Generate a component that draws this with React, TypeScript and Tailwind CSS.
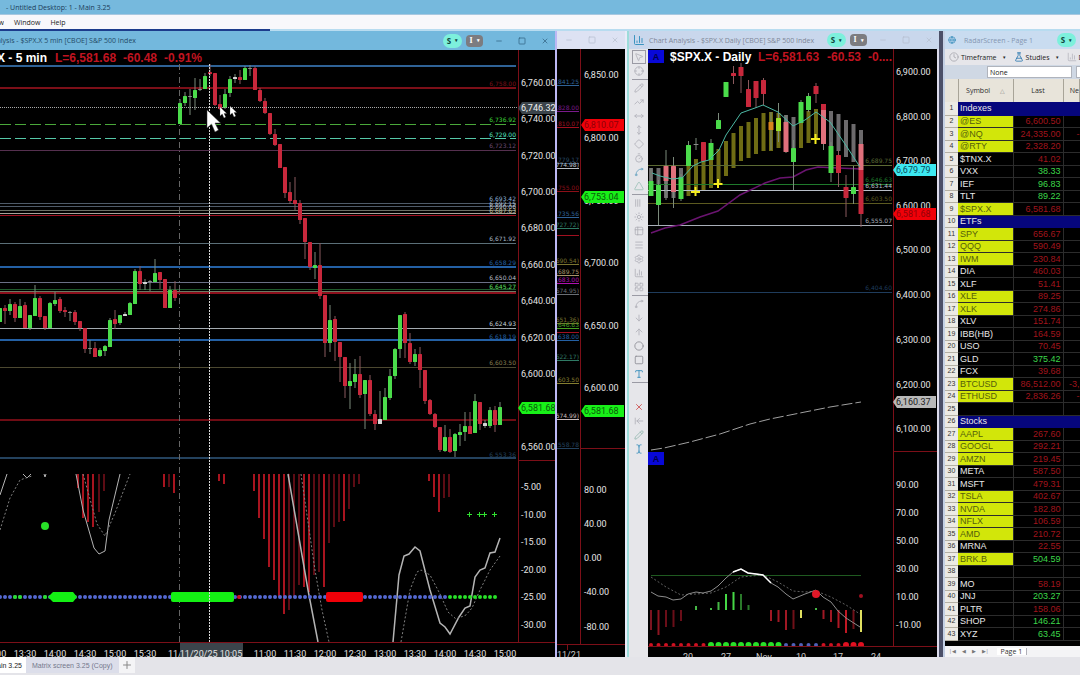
import {
  ArrowDown,
  ArrowLeftToLine,
  ArrowUp,
  BarChart3,
  Circle,
  Clock,
  Crosshair,
  Diamond,
  FlaskConical,
  Globe,
  LayoutGrid,
  Menu,
  Minus,
  MousePointer2,
  MoveHorizontal,
  MoveVertical,
  Pencil,
  Plus,
  Settings,
  Spline,
  Square,
  Sun,
  Table2,
  Tally3,
  TextCursor,
  Timer,
  TrendingUp,
  Triangle,
  Type,
  X,
} from "lucide-react";
import type { LucideIcon } from "lucide-react";
import { clsx } from "clsx";

// kind, body top, body bottom, wick top, wick bottom
type Candle = [string, number, number, number, number];
// ty is the text's own baseline, for levels that sit close together
type Level = { y: number; color: string; text?: string; dash?: string; w?: number; ty?: number };

const COLORS: Record<string, string> = {
  g: "#4bdc4b",
  l: "#9be32c",
  o: "#d8861c",
  p: "#e0707c",
  r: "#c8283c",
  w: "#d6d6d6",
  x: "#8a8a8a",
};

const FIVE_MIN: Candle[] = [
  ["g", 308, 322, 308, 322], ["r", 308, 311, 305, 324], ["g", 304, 311, 299, 315],
  ["r", 304, 318, 302, 322], ["g", 306, 318, 299, 318], ["r", 305, 328, 302, 328],
  ["g", 315, 328, 315, 330], ["g", 298, 316, 285, 316], ["r", 298, 317, 296, 320],
  ["r", 316, 328, 316, 330], ["g", 303, 328, 302, 328], ["g", 300, 304, 292, 306],
  ["r", 299, 311, 297, 313], ["r", 310, 312, 307, 317], ["x", 312, 313, 311, 321],
  ["r", 312, 322, 310, 325], ["r", 321, 328, 321, 331], ["r", 328, 349, 328, 353],
  ["x", 348, 349, 340, 354], ["r", 348, 357, 342, 357], ["g", 350, 356, 348, 357],
  ["g", 346, 351, 345, 356], ["g", 320, 347, 318, 347], ["r", 319, 324, 310, 329],
  ["g", 315, 323, 315, 325], ["w", 314, 316, 312, 316], ["g", 303, 315, 302, 315],
  ["g", 271, 304, 269, 304], ["r", 271, 284, 266, 290], ["w", 282, 284, 279, 290],
  ["x", 281, 282, 280, 291], ["g", 273, 282, 259, 282], ["r", 272, 280, 272, 289],
  ["r", 279, 308, 279, 308], ["g", 290, 308, 286, 308], ["r", 290, 298, 281, 301],
  ["g", 103, 124, 99, 124], ["g", 96, 103, 92, 106], ["x", 96, 97, 89, 115],
  ["g", 90, 98, 78, 110], ["x", 89, 90, 79, 91], ["g", 76, 89, 73, 89],
  ["r", 72, 74, 64, 76], ["r", 73, 105, 73, 106], ["r", 104, 109, 95, 110],
  ["g", 94, 108, 89, 109], ["g", 79, 93, 76, 97], ["w", 77, 79, 74, 83],
  ["r", 77, 80, 70, 84], ["g", 68, 80, 66, 80], ["x", 68, 69, 65, 76],
  ["r", 68, 90, 66, 90], ["r", 90, 101, 88, 102], ["r", 101, 113, 98, 114],
  ["r", 113, 134, 113, 135], ["r", 134, 145, 129, 146], ["r", 144, 168, 144, 168],
  ["r", 167, 193, 167, 198], ["r", 192, 201, 182, 204], ["r", 200, 204, 177, 210],
  ["r", 203, 220, 200, 224], ["r", 218, 242, 218, 259], ["r", 242, 267, 242, 270],
  ["g", 265, 268, 252, 279], ["r", 265, 296, 243, 299], ["r", 295, 343, 295, 357],
  ["g", 320, 343, 305, 352], ["r", 319, 342, 316, 361], ["r", 342, 357, 342, 382],
  ["r", 357, 386, 357, 398], ["g", 381, 386, 363, 409], ["g", 374, 382, 359, 388],
  ["r", 374, 395, 356, 398], ["g", 380, 394, 380, 429], ["r", 380, 414, 375, 416],
  ["r", 414, 424, 410, 430], ["w", 419, 424, 391, 424], ["g", 397, 420, 388, 420],
  ["g", 376, 398, 369, 400], ["g", 349, 376, 348, 379], ["g", 315, 349, 315, 358],
  ["r", 314, 343, 312, 358], ["r", 343, 362, 333, 364], ["g", 354, 362, 349, 366],
  ["r", 354, 370, 347, 388], ["r", 370, 401, 370, 404], ["r", 400, 414, 399, 415],
  ["r", 414, 427, 413, 428], ["r", 427, 450, 427, 452], ["g", 437, 451, 425, 452],
  ["r", 437, 452, 429, 453], ["g", 434, 451, 433, 457], ["g", 432, 435, 424, 446],
  ["g", 426, 432, 412, 441], ["r", 426, 434, 412, 434], ["g", 401, 433, 394, 433],
  ["r", 402, 424, 402, 430], ["w", 423, 426, 420, 428], ["g", 410, 426, 407, 428],
  ["r", 410, 425, 406, 432], ["g", 407, 425, 402, 425],
];

const LEVELS: Level[] = [
  { y: 66, color: "#2f6296", w: 2 },
  { y: 88, color: "#7c0f18", w: 2, text: "6,758.00", ty: 86 },
  { y: 124, color: "#4aa83a", dash: "11 4", text: "6,736.92" },
  { y: 138, color: "#55c8a8", dash: "11 4", text: "6,729.00", ty: 137 },
  { y: 150, color: "#55304f", text: "6,723.12", ty: 148 },
  { y: 203, color: "#4e5a68", text: "6,693.42" },
  { y: 206, color: "#4e5a68", text: "6,692.15", ty: 206 },
  { y: 210, color: "#6d6f66", text: "6,690.06", ty: 209 },
  { y: 213, color: "#a8a29a", text: "6,687.63", ty: 213 },
  { y: 215, color: "#a01020" },
  { y: 243, color: "#5b6f78", text: "6,671.92" },
  { y: 267, color: "#2460a4", w: 2, text: "6,658.29", ty: 265 },
  { y: 282, color: "#6a6f86", text: "6,650.04", ty: 280 },
  { y: 289, color: "#1f5a2c", text: "6,645.27", ty: 289 },
  { y: 291, color: "#6a7a62" },
  { y: 293, color: "#8c0f1c", w: 2 },
  { y: 328, color: "#a3aab0", text: "6,624.93" },
  { y: 340, color: "#2460a4", w: 2, text: "6,618.19", ty: 339 },
  { y: 367, color: "#4c4830", text: "6,603.50" },
  { y: 420, color: "#6f0c14", w: 2 },
  { y: 458, color: "#24425e", w: 2, text: "6,553.36", ty: 457 },
];

const LABEL_COLORS: Record<string, string> = {
  "6,736.92": "#3fd83a",
  "6,729.00": "#54e6c4",
  "6,723.12": "#6b4a72",
  "6,693.42": "#8fb0d8",
  "6,692.15": "#a9bcd4",
  "6,690.06": "#b0b8c0",
  "6,687.63": "#c0c0a0",
  "6,671.92": "#a9bac8",
  "6,650.04": "#b8bec8",
  "6,645.27": "#5ee060",
  "6,624.93": "#c4d0da",
  "6,603.50": "#857e50",
};

// x, bottom, dim
const HISTOGRAM: [number, number, boolean?][] = [
  [78, 488], [83, 518], [88, 522], [93, 527], [99, 512, true], [104, 491, true],
  [164, 487], [169, 487, true], [174, 493], [219, 481], [224, 484],
  [254, 491], [259, 518], [264, 539], [269, 567], [274, 580], [279, 597],
  [284, 614], [289, 610, true], [294, 598, true], [299, 585, true], [304, 587],
  [309, 592], [314, 575, true], [319, 572, true], [324, 587], [329, 543, true],
  [334, 527, true], [339, 522, true], [344, 521], [349, 509, true], [354, 487, true],
  [359, 484, true], [429, 481], [434, 497], [439, 512], [444, 498, true], [449, 497, true],
];

const DAILY: Candle[] = [
  ["g", 181, 196, 168, 196], ["g", 185, 205, 180, 225], ["p", 166, 181, 150, 200],
  ["p", 166, 192, 157, 208], ["g", 177, 199, 174, 201], ["g", 145, 166, 141, 166],
  ["x", 144, 145, 138, 150], ["r", 142, 161, 142, 161], ["g", 143, 160, 139, 160],
  ["g", 120, 129, 113, 129], ["g", 82, 97, 82, 97], ["r", 73, 76, 66, 84],
  ["r", 67, 76, 63, 93], ["r", 89, 107, 80, 107], ["r", 81, 98, 81, 108],
  ["r", 80, 94, 78, 105], ["o", 122, 130, 112, 150], ["l", 118, 131, 103, 142],
  ["p", 122, 152, 115, 153], ["g", 148, 162, 140, 190], ["g", 102, 123, 100, 123],
  ["g", 96, 110, 93, 112], ["r", 86, 94, 83, 103], ["p", 105, 144, 104, 150],
  ["g", 146, 173, 142, 182], ["r", 155, 173, 150, 187], ["r", 187, 198, 175, 217],
  ["g", 187, 194, 166, 204], ["r", 170, 214, 144, 227],
];

// ribbon behind the daily candles: top, bottom, olive when rising
const RIBBON: [number, number, boolean][] = [
  [168, 196, false], [168, 200, false], [168, 198, false], [168, 198, false],
  [168, 198, false], [166, 196, true], [159, 193, true], [158, 191, true],
  [157, 188, true], [149, 185, true], [141, 176, true], [133, 168, true],
  [126, 161, true], [122, 158, true], [118, 154, true], [113, 151, true],
  [112, 151, true], [113, 148, true], [115, 151, false], [117, 148, false],
  [112, 148, true], [111, 143, true], [109, 138, true], [110, 144, false],
  [111, 147, false], [114, 151, false], [120, 157, false], [124, 162, false],
  [130, 170, false],
];

// index, end of the bar measured from the zero line, colour
const DAILY_HIST: [number, number, string][] = [
  [0, 630, "#7c1420"], [1, 635, "#8c1420"], [2, 627, "#6a0e18"], [3, 627, "#6a0e18"],
  [4, 621, "#6a0e18"], [6, 606, "#46b846"], [8, 608, "#46b846"], [9, 602, "#46b846"],
  [10, 594, "#46d846"], [11, 592, "#46d846"], [12, 594, "#2a7a2a"], [13, 605, "#2a7a2a"],
  [16, 621, "#a01824"], [17, 622, "#a01824"], [18, 630, "#a01824"], [19, 629, "#701018"],
  [20, 618, "#e0e060"], [22, 608, "#46b846"], [23, 619, "#a01824"], [24, 622, "#a01824"],
  [25, 628, "#b01824"], [26, 633, "#c01824"], [27, 629, "#701018"], [28, 632, "#e0e060"],
];

type Row = { symbol: string; last?: string; net?: string; up?: boolean; hot?: boolean; group?: boolean };

const ROWS: Row[] = [
  { symbol: "Indexes", group: true },
  { symbol: "@ES", last: "6,600.50", hot: true },
  { symbol: "@NQ", last: "24,335.00", net: "-", hot: true },
  { symbol: "@RTY", last: "2,328.20", hot: true },
  { symbol: "$TNX.X", last: "41.02" },
  { symbol: "VXX", last: "38.33", up: true },
  { symbol: "IEF", last: "96.83", up: true },
  { symbol: "TLT", last: "89.22", up: true },
  { symbol: "$SPX.X", last: "6,581.68", hot: true },
  { symbol: "ETFs", group: true },
  { symbol: "SPY", last: "656.67", hot: true },
  { symbol: "QQQ", last: "590.49", hot: true },
  { symbol: "IWM", last: "230.84", hot: true },
  { symbol: "DIA", last: "460.03" },
  { symbol: "XLF", last: "51.41" },
  { symbol: "XLE", last: "89.25", hot: true },
  { symbol: "XLK", last: "274.86", hot: true },
  { symbol: "XLV", last: "151.74" },
  { symbol: "IBB(HB)", last: "164.59" },
  { symbol: "USO", last: "70.45" },
  { symbol: "GLD", last: "375.42", up: true },
  { symbol: "FCX", last: "39.68" },
  { symbol: "BTCUSD", last: "86,512.00", net: "-3,", hot: true },
  { symbol: "ETHUSD", last: "2,836.26", net: "-", hot: true },
  { symbol: "" },
  { symbol: "Stocks", group: true },
  { symbol: "AAPL", last: "267.60", hot: true },
  { symbol: "GOOGL", last: "292.21", hot: true },
  { symbol: "AMZN", last: "219.45", hot: true },
  { symbol: "META", last: "587.50" },
  { symbol: "MSFT", last: "479.31" },
  { symbol: "TSLA", last: "402.67", hot: true },
  { symbol: "NVDA", last: "182.80", hot: true },
  { symbol: "NFLX", last: "106.59", hot: true },
  { symbol: "AMD", last: "210.72", hot: true },
  { symbol: "MRNA", last: "22.55" },
  { symbol: "BRK.B", last: "504.59", up: true, hot: true },
  { symbol: "" },
  { symbol: "MO", last: "58.19" },
  { symbol: "JNJ", last: "203.27", up: true },
  { symbol: "PLTR", last: "158.06" },
  { symbol: "SHOP", last: "146.21", up: true },
  { symbol: "XYZ", last: "63.45", up: true },
];

const AXIS_TEXT = "font-['Roboto',sans-serif] text-[9px]";
const LEVEL_TEXT = "font-['DejaVu_Sans',sans-serif] text-[6px]";
const CHART_TITLE = "font-['Liberation_Sans',sans-serif] text-[12px] font-bold";

function Candles({ data, x0, step, width }: { data: Candle[]; x0: number; step: number; width: number }) {
  return (
    <g>
      {data.map(([kind, top, bottom, high, low], i) => {
        const x = x0 + i * step;
        return (
          <g key={i}>
            <line stroke={kind === "r" ? "#8a5a5e" : "#7b8a7b"} x1={x} x2={x} y1={high} y2={low} />
            <rect
              fill={COLORS[kind]}
              height={Math.max(bottom - top, 1)}
              rx="0.5"
              width={width}
              x={x - width / 2}
              y={top}
            />
          </g>
        );
      })}
    </g>
  );
}

function AxisLabels({ labels, x }: { labels: [number, string][]; x: number }) {
  return (
    <g className={AXIS_TEXT} fill="#e4e4e4">
      {labels.map(([y, text]) => (
        <text key={y} x={x} y={y + 3}>
          {text}
        </text>
      ))}
    </g>
  );
}

interface PriceTagProps {
  fill: string;
  right: number;
  text: string;
  textFill: string;
  x: number;
  y: number;
}

function PriceTag({ fill, right, text, textFill, x, y }: PriceTagProps) {
  return (
    <g>
      <path d={`M${x} ${y}L${x + 4} ${y - 6}H${right}V${y + 6}H${x + 4}Z`} fill={fill} />
      <text className={AXIS_TEXT} fill={textFill} x={x + 3} y={y + 3}>
        {text}
      </text>
    </g>
  );
}

function Dots({ color, from, r = 2, step = 5, to, y }: { color: string; from: number; r?: number; step?: number; to: number; y: number }) {
  const count = Math.floor((to - from) / step) + 1;
  return (
    <g fill={color}>
      {Array.from({ length: count }, (_, i) => (
        <circle cx={from + i * step} cy={y} key={i} r={r} />
      ))}
    </g>
  );
}

function Pointer({ scale, x, y }: { scale: number; x: number; y: number }) {
  return (
    <path
      d="M0 0V18L4.500 14L8 22L11.500 20L8 13H13.500Z"
      fill="#fff"
      stroke="#333"
      strokeWidth="0.5"
      transform={`translate(${x} ${y}) scale(${scale})`}
    />
  );
}

function FiveMinuteChart() {
  const prices: [number, string][] = [
    [83, "6,760.00"], [119, "6,740.00"], [156, "6,720.00"], [192, "6,700.00"],
    [228, "6,680.00"], [265, "6,660.00"], [301, "6,640.00"], [338, "6,620.00"],
    [374, "6,600.00"], [447, "6,560.00"], [487, "-5.00"], [515, "-10.00"],
    [542, "-15.00"], [570, "-20.00"], [597, "-25.00"], [625, "-30.00"],
  ];
  const times: [number, string][] = [
    [-5, "13:00"], [25, "13:30"], [55, "14:00"], [85, "14:30"], [115, "15:00"], [145, "15:30"],
    [180, "11/20"], [265, "11:00"], [295, "11:30"], [325, "12:00"], [355, "12:30"],
    [385, "13:00"], [415, "13:30"], [445, "14:00"], [475, "14:30"], [505, "15:00"],
  ];
  return (
    <svg aria-label="S&P 500 five minute chart" className="block h-auto w-full bg-black" role="img" viewBox="0 50 555 607">
      {LEVELS.map(({ color, dash, w = 1, y }) => (
        <line key={y} stroke={color} strokeDasharray={dash} strokeWidth={w} x1="0" x2="516" y1={y + (w === 1 ? 0.5 : 0)} y2={y + (w === 1 ? 0.5 : 0)} />
      ))}
      <line stroke="#666" strokeDasharray="6 3 1 3" x1="179.500" x2="179.500" y1="64" y2="642" />

      {HISTOGRAM.map(([x, bottom, dim]) => (
        <rect fill={dim ? "#5c0c14" : "#a8141f"} height={bottom - 474} key={x} width="2" x={x - 1} y="474" />
      ))}
      <g fill="none" stroke="#b4b4b4">
        <path d="M0 495L7 474M23 474L27 478L31 474M44 474L45 477L46 474M76 474L83 510L94 548L99 554L105 551L109 520L120 474" />
        <path d="M288 474L308 590L318 642M393 642L399 575L404 556L409 554L415 547L420 551L430 590L440 623L445 627L450 634L459 617L465 608L470 606L475 577L480 570L485 568L490 553L495 552L500 538" strokeWidth="1.500" />
      </g>
      <path
        d="M0 530L10 498L20 480L32 476M83 474L97 524L105 536L115 513L130 474M301 474L315 570L322 610L329 642M401 642L410 590L417 572L421 570L430 575L440 594L448 612L456 619L466 615L472 608L480 590L490 570L500 556"
        fill="none"
        stroke="#808080"
        strokeDasharray="2 2"
      />
      <circle cx="45" cy="526" fill="#28e028" r="4" />
      <Dots color="#5468d0" from={0} to={446} y={597} />
      <Dots color="#28e028" from={15} to={20} y={597} />
      <Dots color="#28e028" from={45} to={45} y={597} />
      <Dots color="#d01020" from={239} to={239} y={597} />
      <Dots color="#28e028" from={450} to={495} y={597} />
      <path d="M48 597L53 592H73L77 597L73 602H53Z" fill="#14f014" />
      <rect fill="#14f014" height="10" rx="2" width="63" x="171" y="592" />
      <rect fill="#f00008" height="10" rx="2" width="37" x="326" y="592" />
      <path d="M467 514.500H472M469.500 512V517M477 514.500H482M479.500 512V517M482 514.500H487M484.500 512V517M492 514.500H497M494.500 512V517" stroke="#30e030" />

      <Candles data={FIVE_MIN} step={5} width={4} x0={0} />

      <line stroke="#a8a8a8" strokeDasharray="1 1" x1="0" x2="520" y1="107.500" y2="107.500" />
      <line stroke="#d8d8d8" strokeDasharray="2 1" x1="209.500" x2="209.500" y1="64" y2="642" />
      <g className={LEVEL_TEXT} textAnchor="end">
        {LEVELS.filter((level) => level.text).map(({ color, text = "", ty, y }) => (
          <text fill={LABEL_COLORS[text] ?? color} key={text} x="516" y={ty ?? y - 2}>
            {text}
          </text>
        ))}
      </g>

      <path d="M518.500 50V642M518 460.500H555M0 642.500H555" fill="none" stroke="#7c0f18" />
      <AxisLabels labels={prices} x={521} />
      <PriceTag fill="#3b444b" right={555} text="6,746.32" textFill="#f0f0f0" x={518} y={108} />
      <PriceTag fill="#18f018" right={555} text="6,581.68" textFill="#0a5a0a" x={518} y={408} />

      <g className={AXIS_TEXT} fill="#e4e4e4" textAnchor="middle">
        {times.map(([x, text]) => (
          <text key={x} x={x} y="657">
            {text}
          </text>
        ))}
        <rect fill="#3b444b" height="14" width="63" x="180" y="643" />
        <text x="211" y="657">11/20/25 10:05</text>
      </g>

      <g className={CHART_TITLE}>
        <text fill="#fff" textAnchor="end" x="47" y="62">$SPX.X - 5 min</text>
        <text fill="#c01420" x="55" y="62">L=6,581.68</text>
        <text fill="#c01420" x="123" y="62">-60.48</text>
        <text fill="#c01420" x="164" y="62">-0.91%</text>
      </g>
      <Pointer scale={1} x={207} y={110} />
      <Pointer scale={0.5} x={220} y={107} />
      <Pointer scale={0.5} x={230} y={106} />
    </svg>
  );
}

function SideChart() {
  const levels: Level[] = [
    { y: 85, color: "#2f6296", text: "6,841.25" },
    { y: 111, color: "#7a1a8c", text: "6,828.00" },
    { y: 127, color: "#a01020", text: "6,810.07" },
    { y: 163, color: "#2a4a68", text: "6,779.17" },
    { y: 168, color: "#b8bec4", text: "(6,774.98)" },
    { y: 191, color: "#8c0f18", text: "6,755.00" },
    { y: 217, color: "#2f6296", text: "6,735.56" },
    { y: 228, color: "#2f7a64", text: "(6,727.72)" },
    { y: 235, color: "#a01020" },
    { y: 264, color: "#7a7430", text: "(6,690.54)" },
    { y: 275, color: "#a8926a", text: "6,689.75" },
    { y: 283, color: "#b010b0", text: "6,683.00" },
    { y: 294, color: "#6a6e74", text: "(6,674.95)" },
    { y: 323, color: "#7a7430", text: "(6,651.36)" },
    { y: 328, color: "#46a020", text: "6,646.63" },
    { y: 332, color: "#a01020" },
    { y: 340, color: "#2460a4", text: "6,638.00" },
    { y: 360, color: "#2f7a64", text: "(6,622.17)" },
    { y: 383, color: "#857e30", text: "6,603.50" },
    { y: 419, color: "#c8b8b8", text: "(6,574.99)" },
    { y: 448, color: "#24425e", text: "6,558.78" },
  ];
  const prices: [number, string][] = [
    [75, "6,850.00"], [138, "6,800.00"], [201, "6,750.00"], [263, "6,700.00"], [326, "6,650.00"],
    [388, "6,600.00"], [490, "80.00"], [524, "40.00"], [558, "0.00"], [592, "-40.00"], [627, "-80.00"],
  ];
  return (
    <svg aria-label="Price axis of the chart behind" className="block h-auto w-full bg-black" role="img" viewBox="557 49 68 608">
      <g className={LEVEL_TEXT} textAnchor="end">
        {levels.map(({ color, text, y }) => (
          <g key={y}>
            <line stroke={color} x1="557" x2="579" y1={y + 0.5} y2={y + 0.5} />
            <text fill={color} x="579" y={y - 1}>
              {text}
            </text>
          </g>
        ))}
      </g>
      <path d="M580.500 49V644M581 448.500H625M557 644.500H625M567.500 644V650" fill="none" stroke="#7c0f18" />
      <AxisLabels labels={prices} x={584} />
      <PriceTag fill="#f00008" right={624} text="6,810.07" textFill="#900008" x={581} y={125} />
      <PriceTag fill="#18f018" right={624} text="6,753.04" textFill="#0a5a0a" x={581} y={197} />
      <PriceTag fill="#18f018" right={624} text="6,581.68" textFill="#0a5a0a" x={581} y={411} />
      <text className={AXIS_TEXT} fill="#c8c8c8" x="557" y="658">11/21</text>
    </svg>
  );
}

function DailyChart() {
  const levels: Level[] = [
    { y: 165, color: "#5c6a34", text: "6,689.75" },
    { y: 184, color: "#1f7a2c", text: "6,646.63" },
    { y: 190, color: "#b8bec8", text: "6,631.44" },
    { y: 203, color: "#5c5a20", text: "6,603.50" },
    { y: 225, color: "#a8aeb8", text: "6,555.07" },
    { y: 292, color: "#1f3c5c", text: "6,404.60" },
  ];
  const prices: [number, string][] = [
    [72, "6,900.00"], [117, "6,800.00"], [161, "6,700.00"], [206, "6,600.00"], [250, "6,500.00"],
    [295, "6,400.00"], [340, "6,300.00"], [385, "6,200.00"], [429, "6,100.00"], [485, "90.00"],
    [513, "70.00"], [541, "50.00"], [569, "30.00"], [597, "10.00"], [625, "-10.00"],
  ];
  const dates: [number, string][] = [
    [688, "20"], [726, "27"], [764, "Nov"], [801, "10"], [838, "17"], [876, "24"],
  ];
  return (
    <svg aria-label="S&P 500 daily chart" className="block h-auto w-full bg-black" role="img" viewBox="648 49 289 608">
      {RIBBON.map(([top, bottom, rising], i) => (
        <rect fill={rising ? "#6f6c14" : "#6c6a6c"} height={bottom - top} key={i} width="4" x={649 + i * 7.5} y={top} />
      ))}
      {levels.map(({ color, y }) => (
        <line key={y} stroke={color} x1="648" x2="892" y1={y + 0.5} y2={y + 0.5} />
      ))}
      <path d="M651 233L665 228L680 225L700 217L718 211L740 195L765 183L780 178L793 177L806 170L818 167L838 168L861 169" fill="none" stroke="#6a1470" strokeWidth="1.500" />
      <Candles data={DAILY} step={7.5} width={5} x0={651} />
      <rect fill={COLORS.r} height="6" width="5" x="821" y="104" />
      <rect fill={COLORS.p} height="26" width="5" x="858.500" y="144" />
      <path d="M652 173L660 176L672 179L682 178L693 166L701 162L709 160L719 150L726 135L741 113L755 108L763 105L778 112L793 126L805 120L816 112L830 122L845 144L860 167" fill="none" stroke="#4cb8a4" />
      <path d="M691 192H700M695.500 187V196M713.500 184H722.500M718 179V188M811 139H820M815.500 134V144" stroke="#f4ec20" strokeWidth="2" />
      <g className={LEVEL_TEXT} textAnchor="end">
        {levels.map(({ color, text, y }) => (
          <text fill={color} key={y} x="892" y={y - 2}>
            {text}
          </text>
        ))}
      </g>
      <path d="M651 450L664 448L690 442L720 434L750 424L770 419L800 413L830 407L861 402" fill="none" stroke="#a0a0a0" strokeDasharray="11 3" />

      <line stroke="#1f5a20" x1="651" x2="861" y1="575.500" y2="575.500" />
      {DAILY_HIST.map(([i, end, color]) => (
        <rect fill={color} height={Math.abs(end - 610)} key={i} width="2" x={650 + i * 7.5} y={Math.min(end, 610)} />
      ))}
      <path d="M651 577L666 587L681 595L696 594L711 593L726 587L741 577L763 575L778 582L793 591L805 592L816 591L831 597L846 605L860 614" fill="none" stroke="#606060" strokeDasharray="2 2" />
      <path d="M651 592L658 596L666 597L673 600L681 599L688 594L696 592L703 593L711 591L718 586L726 578L733 572L741 569L748 573L756 574L763 575L771 583L778 587L786 594L793 599L805 594L816 590L823 597L831 602L838 611L846 618L860 627" fill="none" stroke="#8c8c8c" />
      <path d="M733 572L741 569L748 573L756 574L763 575L771 583" fill="none" stroke="#fff" strokeWidth="1.500" />
      <circle cx="816" cy="594" fill="#e01828" r="4" />
      <circle cx="861" cy="596" fill="#a01020" r="2" />
      <Dots color="#d01020" from={651} step={7.5} to={704} y={645} />
      <Dots color="#28e028" from={711} r={3} step={7.5} to={779} y={645} />
      <Dots color="#5060b8" from={786} step={7.5} to={816} y={645} />
      <Dots color="#d01020" from={823.5} step={7.5} to={840} y={645} />
      <Dots color="#e01020" from={846} r={3} step={7.5} to={861} y={645} />
      <rect height="10" width="245" x="648" y="646" />

      <path d="M893.500 49V646M893 451.500H937M648 646.500H937" fill="none" stroke="#7c0f18" />
      <AxisLabels labels={prices} x={896} />
      <PriceTag fill="#3ce8f0" right={936} text="6,679.79" textFill="#0a4a5a" x={893} y={170} />
      <PriceTag fill="#f00008" right={936} text="6,581.68" textFill="#900008" x={893} y={214} />
      <PriceTag fill="#b8b8b8" right={936} text="6,160.37" textFill="#202020" x={893} y={402} />
      <g className={AXIS_TEXT} fill="#c8c8c8" textAnchor="middle">
        {dates.map(([x, text]) => (
          <text key={x} x={x} y="660">
            {text}
          </text>
        ))}
      </g>

      <rect fill="#0808d8" height="13" width="16" x="648" y="50" />
      <rect fill="#0808d8" height="13" width="16" x="648" y="452" />
      <g className="font-['Liberation_Sans',sans-serif] text-[9px] font-bold" fill="#00004c" textAnchor="middle">
        <text x="656" y="60">A</text>
        <text x="656" y="462">A</text>
      </g>
      <g className={CHART_TITLE}>
        <text fill="#fff" x="670" y="61">$SPX.X - Daily</text>
        <text fill="#c01420" x="758" y="61">L=6,581.63</text>
        <text fill="#c01420" x="827" y="61">-60.53</text>
        <text fill="#c01420" x="868" y="61">-0....</text>
      </g>
    </svg>
  );
}

function LinkBadges() {
  return (
    <div className="flex items-center gap-1">
      <button className="flex h-[14px] w-[19px] items-center justify-center rounded-full bg-[#7df0dc] text-[8px] font-bold text-[#12463e]" type="button">
        S<span className="ml-1 text-[5px]">▾</span>
      </button>
      <button className="flex h-3 w-[17px] items-center justify-center rounded-sm bg-[#7c7c80] font-['Liberation_Serif',serif] text-[8px] font-bold text-white" type="button">
        I<span className="ml-1 text-[5px]">▾</span>
      </button>
    </div>
  );
}

function WindowControls({ faded }: { faded?: boolean }) {
  return (
    <div className={clsx("flex shrink-0 items-center gap-[15px]", faded ? "text-[#b4bccc]" : "text-[#2c5a78]")}>
      <button aria-label="Minimize" type="button">
        <Minus className="size-2" />
      </button>
      <button aria-label="Maximize" type="button">
        <Square className="size-2" />
      </button>
      <button aria-label="Close" type="button">
        <X className="size-2" />
      </button>
    </div>
  );
}

const TOOL_GROUPS: { icon: LucideIcon; label: string; className?: string }[][] = [
  [
    { icon: MousePointer2, label: "Select", className: "border border-[#9a9aa4]" },
    { icon: Crosshair, label: "Crosshair" },
  ],
  [
    { icon: Pencil, label: "Trend line" },
    { icon: TrendingUp, label: "Ray" },
    { icon: MoveHorizontal, label: "Horizontal line" },
    { icon: MoveVertical, label: "Vertical line" },
    { icon: Diamond, label: "Price levels" },
    { icon: Timer, label: "Time cycles" },
    { icon: Spline, label: "Regression", className: "text-[#6aa4c0]" },
    { icon: Triangle, label: "Triangle", className: "text-[#9cc0b8]" },
  ],
  [
    { icon: Tally3, label: "Parallel lines" },
    { icon: Sun, label: "Gann fan" },
    { icon: Table2, label: "Grid" },
    { icon: Menu, label: "Retracement" },
    { icon: Settings, label: "Arcs" },
    { icon: BarChart3, label: "Volume profile" },
    { icon: LayoutGrid, label: "Extensions" },
  ],
  [
    { icon: Spline, label: "Curve" },
    { icon: ArrowDown, label: "Down arrow" },
    { icon: ArrowUp, label: "Up arrow" },
    { icon: Circle, label: "Ellipse", className: "text-[#8c8c94]" },
    { icon: Square, label: "Rectangle", className: "text-[#8c8c94]" },
    { icon: Type, label: "Text", className: "text-[#2c88b8]" },
  ],
  [
    { icon: X, label: "Remove drawing", className: "text-[#cc4a4a]" },
    { icon: ArrowLeftToLine, label: "Extend left" },
    { icon: Pencil, label: "Edit", className: "text-[#94b8b0]" },
    { icon: TextCursor, label: "Label", className: "text-[#2c88b8]" },
  ],
];

function DrawingToolbar() {
  return (
    <div className="w-[19px] shrink-0 bg-[#e6e6ea] pt-px pl-[3px] text-[#b0b0b8]">
      {TOOL_GROUPS.map((group, i) => (
        <div
          className={clsx(
            "flex flex-col",
            i < 4 && "mb-px border-b border-[#9a9aa4] pb-px",
            i === 4 && "pt-4",
          )}
          key={i}
        >
          {group.map(({ className, icon: Icon, label }) => (
            <button
              aria-label={label}
              className={clsx("flex h-[14px] w-[14px] items-center justify-center", className)}
              key={label}
              type="button"
            >
              <Icon className="size-[10px]" />
            </button>
          ))}
        </div>
      ))}
    </div>
  );
}

function RadarTable() {
  return (
    <table className="w-full table-fixed border-collapse">
      <colgroup>
        <col className="w-[13px]" />
        <col className="w-[55px]" />
        <col className="w-[50px]" />
        <col />
      </colgroup>
      <thead>
        <tr className="h-[23px] bg-[#e8e4da] text-[7px] text-[#2c2c2c] [&>th]:border-r [&>th]:border-[#a8a498] [&>th]:p-0 [&>th]:font-normal">
          <th />
          <th>
            Symbol <span className="ml-2 text-[6px] text-[#888]">△</span>
          </th>
          <th>Last</th>
          <th className="overflow-hidden text-right">Ne</th>
        </tr>
      </thead>
      <tbody className="font-['Liberation_Sans',sans-serif]">
        {ROWS.map(({ group, hot, last, net, symbol, up }, i) => (
          <tr
            className={clsx(
              "odd:h-[13px] even:h-[12px] [&>td]:border-b [&>td]:p-0",
              group ? "bg-[#06067c] [&>td]:border-[#06067c]" : "bg-black [&>td]:border-[#2c2c2c]",
            )}
            key={i}
          >
            <th className="border-b border-[#b4b0a4] bg-[#eceae4] p-0 text-center text-[7px] leading-[10px] font-normal text-[#333]">
              {i + 1}
            </th>
            <td
              className={clsx(
                "text-[9px] leading-[10px] whitespace-nowrap",
                hot ? "bg-[#d2e60a] text-[#55600a]" : "text-[#e8e8e8]",
              )}
            >
              <span className="pl-0.5">{symbol}</span>
            </td>
            <td
              className={clsx(
                "text-right text-[9px] leading-[10px]",
                !group && "border-x",
                up ? "text-[#3cd84a]" : "text-[#a0141c]",
              )}
            >
              <span className="pr-0.5">{last}</span>
            </td>
            <td className="overflow-hidden text-right text-[9px] leading-[10px] whitespace-nowrap text-[#a0141c]">
              {net}
            </td>
          </tr>
        ))}
      </tbody>
    </table>
  );
}

function RadarScreen() {
  return (
    <section className="flex min-w-0 flex-col overflow-hidden border-l-2 border-[#c4d0e4] bg-black">
      <header className="flex h-[18px] shrink-0 items-center bg-[#c9dcf0] pl-[3px] text-[7px] text-[#8496b0]">
        <Globe className="mr-2 size-2 shrink-0 text-[#2c88b8]" />
        <h2 className="flex-1 whitespace-nowrap">RadarScreen - Page 1</h2>
        <button className="mr-1 flex h-[14px] w-[19px] items-center justify-center rounded-full bg-[#7df0dc] text-[8px] font-bold text-[#12463e]" type="button">
          S<span className="ml-1 text-[5px]">▾</span>
        </button>
      </header>
      <div className="flex h-4 shrink-0 items-center gap-1 bg-[#e6e6ea] pl-1 text-[7px] text-[#222]">
        <button className="flex shrink-0 items-center gap-0.5" type="button">
          <Clock className="size-[10px] text-[#a8a8b0]" />
          Timeframe
          <span className="mx-1 text-[5px]">▾</span>
        </button>
        <button className="flex shrink-0 items-center gap-0.5" type="button">
          <FlaskConical className="size-[10px] text-[#2c78b0]" />
          Studies
          <span className="mx-1 text-[5px]">▾</span>
        </button>
        <button className="flex shrink-0 items-center gap-0.5" type="button">
          <BarChart3 className="size-[10px] text-[#b8b8c0]" />
          Data
        </button>
      </div>
      <div className="flex h-[14px] shrink-0 items-center gap-1 bg-[#cfd8e4] pl-[42px] text-[7px]">
        <select aria-label="Filter" className="h-3 w-[85px] shrink-0 appearance-none border border-[#b0b4bc] bg-white px-0.5 text-[#222]">
          <option>None</option>
        </select>
        <input aria-label="Value" className="h-3 w-10 border border-[#b0b4bc] bg-white" />
      </div>
      <div className="flex-1 bg-black">
        <RadarTable />
      </div>
      <footer className="flex h-[11px] shrink-0 items-center bg-[#f4f4f6] text-[7px] text-[#333]">
        <nav aria-label="Pages" className="flex gap-1.5 px-1 text-[5px] text-[#777]">
          <button aria-label="First page" type="button">|◀</button>
          <button aria-label="Previous page" type="button">◀</button>
          <button aria-label="Next page" type="button">▶</button>
          <button aria-label="Last page" type="button">▶|</button>
        </nav>
        <button className="ml-1 border-r border-[#b0b0b8] bg-white px-1 font-medium" type="button">
          Page 1
        </button>
      </footer>
    </section>
  );
}

export default function App() {
  return (
    <div className="flex min-h-screen flex-col overflow-hidden bg-[#e4e4e9] font-['Open_Sans',sans-serif] leading-none">
      <header className="flex h-[15px] shrink-0 items-center border-b border-[#a8c8e0] bg-[#76b9dd] text-[7px] whitespace-nowrap text-[#1c3c58]">
        <h1 className="pl-1.5">- Untitled Desktop: 1 - Main 3.25</h1>
      </header>
      <nav className="flex h-[14px] shrink-0 items-center gap-[10px] bg-[#f8f8fb] text-[7px] text-[#222]">
        <button className="flex w-1 justify-end overflow-hidden" type="button">
          View
        </button>
        <button type="button">Window</button>
        <button type="button">Help</button>
      </nav>
      <div className="h-0.5 shrink-0 bg-[#b8dcf0]">
        <div className="h-full w-1/4 bg-[#1c3c8c]" />
      </div>

      <main className="grid flex-1 grid-cols-[557fr_72fr_314fr_137fr]">
        <section className="min-w-0 border-r-2 border-[#bcb8f4] bg-black">
          <header className="flex h-[19px] items-center bg-[#73b8dd] text-[7px] whitespace-nowrap text-[#234a66]">
            <h2 className="flex w-[136px] shrink-0 justify-end">Chart Analysis - $SPX.X 5 min [CBOE] S&amp;P 500 Index</h2>
            <div className="flex-1" />
            <LinkBadges />
            <div className="pr-1.5 pl-3">
              <WindowControls />
            </div>
          </header>
          <FiveMinuteChart />
        </section>

        <section className="min-w-0 border-r-2 border-[#9cdcda] bg-[#e8ecf8]">
          <div className="mr-0.5 bg-black">
            <header className="flex h-[18px] items-center justify-end bg-[#dde2f3] pr-1.5">
              <WindowControls faded />
            </header>
            <SideChart />
          </div>
        </section>

        <section className="flex min-w-0 flex-col border-r-4 border-[#4c5068] bg-[#e6e6ea]">
          <header className="flex h-[18px] shrink-0 items-center bg-[#c9d7ec] text-[7px] whitespace-nowrap text-[#7f8798]">
            <BarChart3 className="mx-1 size-3 shrink-0 text-[#3c94c0]" />
            <h2>Chart Analysis - $SPX.X Daily [CBOE] S&amp;P 500 Index</h2>
            <div className="flex-1" />
            <LinkBadges />
            <div className="pr-1.5 pl-3">
              <WindowControls faded />
            </div>
          </header>
          <div className="flex flex-1">
            <DrawingToolbar />
            <div className="min-w-0 flex-1 border-r-2 border-[#dcdcec] bg-black">
              <DailyChart />
            </div>
          </div>
        </section>

        <RadarScreen />
      </main>

      <footer className="flex h-[18px] shrink-0 items-start bg-[#e4e4e9] font-['Liberation_Sans',sans-serif] text-[7px] whitespace-nowrap">
        <button className="flex h-4 w-[26px] items-center justify-end overflow-hidden bg-white pr-1 text-[#222]" type="button">
          Main 3.25
        </button>
        <button className="h-4 bg-[#dcdeea] px-1.5 text-[#74788c]" type="button">
          Matrix screen 3.25 (Copy)
        </button>
        <button aria-label="Add workspace" className="flex h-4 w-4 items-center justify-center bg-[#f4f4f6] text-[#888]" type="button">
          <Plus className="size-3" />
        </button>
      </footer>
    </div>
  );
}
